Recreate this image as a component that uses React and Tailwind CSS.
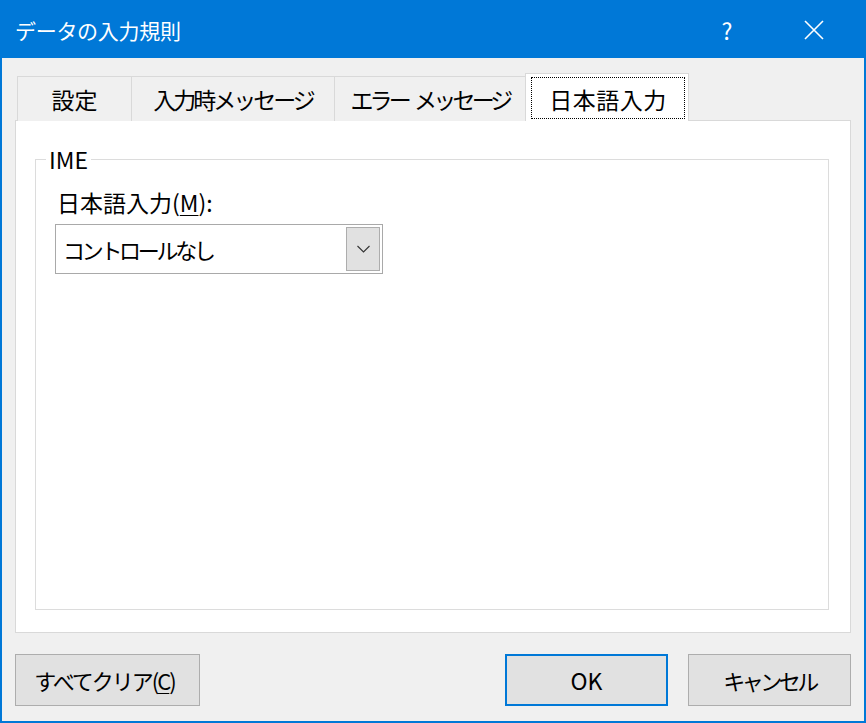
import React from "react";

const font = { fontFamily: '"Noto Sans CJK JP", "Noto Sans", sans-serif' };

const Tab = ({ children, width, className = "" }) => (
  <div
    className={`h-[45px] flex items-center justify-center border-t border-l border-[#d9d9d9] bg-[#f0f0f0] text-[23px] text-black ${width} ${className}`}
  >
    {children}
  </div>
);

export default function App() {
  return (
    <div
      className="w-[866px] h-[723px] flex flex-col border-2 border-[#0078d7] bg-[#f0f0f0] text-black leading-none select-none"
      style={font}
    >
      {/* Title bar */}
      <div className="h-[56px] shrink-0 bg-[#0078d7] flex items-center text-white">
        <div className="pl-[13px] text-[21px] tracking-[-0.3px]">データの入力規則</div>
        <div className="ml-auto w-[72px] flex justify-center text-[23px] -translate-x-[1px]">?</div>
        <div className="w-[100px] flex justify-center">
          <svg width="20" height="20" viewBox="0 0 20 20" fill="none" stroke="white" strokeWidth="1.6">
            <path d="M1 1 L19 19 M19 1 L1 19" />
          </svg>
        </div>
      </div>

      <div className="flex-1 flex flex-col px-[13px] pt-[15px]">
        {/* Tabs */}
        <div className="flex items-end pl-[2px] -mb-px relative z-10">
          <Tab width="w-[114px]">設定</Tab>
          <Tab width="w-[203px]" className="tracking-[-3px]">入力時メッセージ</Tab>
          <Tab width="w-[191px]" className="tracking-[-3.8px]">
            <span>エラー</span>
            <span className="ml-[6px]">メッセージ</span>
          </Tab>
          <div className="w-[164px] h-[48px] flex border-t border-l border-r border-[#d9d9d9] bg-white p-[3px] pb-[2px] pl-[5px]">
            <div className="flex-1 flex items-center justify-center border border-dotted border-black text-[23px] tracking-[0.5px] pt-[2px]">
              日本語入力
            </div>
          </div>
        </div>

        {/* Panel */}
        <div className="h-[513px] border border-[#d9d9d9] bg-white pl-[19px] pr-[21px] pt-[26px] pb-[22px] flex">
          <fieldset className="flex-1 border border-[#dcdcdc]">
            <legend className="ml-[10px] px-[3px] text-[23px] leading-[24px]">IME</legend>
            <div className="px-[21px]">
              <div className="mt-[18px] text-[23px] leading-[26px] flex items-baseline">
                <span>日本語入力(</span>
                <span className="underline underline-offset-[3px] decoration-1">M</span>
                <span>):</span>
              </div>
              <div className="mt-[9px] -ml-[2px] w-[328px] h-[50px] border border-[#a9a9a9] bg-white flex items-center p-[2px]">
                <div className="flex-1 pl-[5px] text-[22px] tracking-[-3.3px]">コントロールなし</div>
                <div className="w-[34px] h-full bg-[#e1e1e1] border border-[#adadad] flex items-center justify-center">
                  <svg width="13" height="8" viewBox="0 0 13 8" fill="none" stroke="#333" strokeWidth="1.1">
                    <path d="M0.5 1 L6.5 7 L12.5 1" />
                  </svg>
                </div>
              </div>
            </div>
          </fieldset>
        </div>

        {/* Buttons */}
        <div className="mt-[21px] flex items-center">
          <button className="w-[185px] h-[52px] bg-[#e1e1e1] border border-[#adadad] text-[22px] tracking-[-2px] flex items-center justify-center pr-[6px]">
            <span>すべてクリア(</span>
            <span className="underline underline-offset-[3px] decoration-1">C</span>
            <span>)</span>
          </button>
          <button className="ml-auto w-[163px] h-[52px] bg-[#e1e1e1] border-2 border-[#0078d7] text-[23px] flex items-center justify-center">
            OK
          </button>
          <button className="ml-[20px] w-[163px] h-[52px] bg-[#e1e1e1] border border-[#adadad] text-[22px] tracking-[-3.5px] flex items-center justify-center">
            キャンセル
          </button>
        </div>
      </div>
    </div>
  );
}
